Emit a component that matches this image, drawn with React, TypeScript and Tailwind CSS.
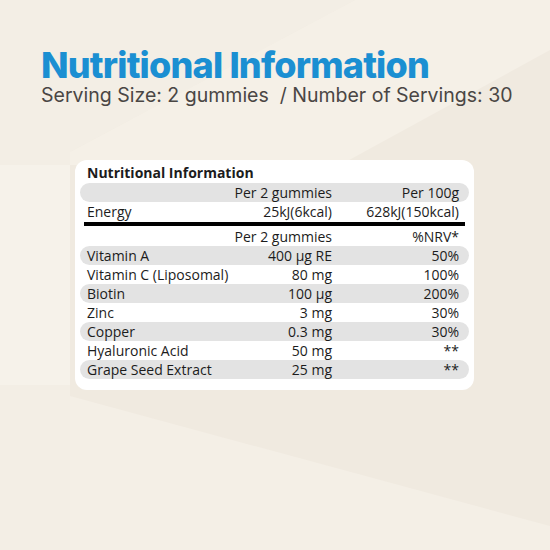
const rows = [
  { name: "Vitamin A", amount: "400 µg RE", nrv: "50%", shade: true },
  { name: "Vitamin C (Liposomal)", amount: "80 mg", nrv: "100%", shade: false },
  { name: "Biotin", amount: "100 µg", nrv: "200%", shade: true },
  { name: "Zinc", amount: "3 mg", nrv: "30%", shade: false },
  { name: "Copper", amount: "0.3 mg", nrv: "30%", shade: true },
  { name: "Hyaluronic Acid", amount: "50 mg", nrv: "**", shade: false },
  { name: "Grape Seed Extract", amount: "25 mg", nrv: "**", shade: true },
];

function Row({
  a,
  b,
  c,
  shade,
}: {
  a: string;
  b: string;
  c: string;
  shade?: boolean;
}) {
  return (
    <div
      className={
        "grid h-[19px] grid-cols-[140px_105px_127px] items-center rounded-full pl-[7px] pr-[11px] text-[14px] leading-[19px] " +
        (shade ? "bg-[#e3e3e3]" : "")
      }
    >
      <span className="whitespace-nowrap">{a}</span>
      <span className="whitespace-nowrap text-right">{b}</span>
      <span className="whitespace-nowrap text-right">{c}</span>
    </div>
  );
}

function Backdrop() {
  return (
    <svg
      className="absolute inset-0 h-full w-full"
      viewBox="0 0 550 550"
      preserveAspectRatio="none"
    >
      <rect width="550" height="550" fill="#f0eae0" />
      <polygon points="0,0 355,0 70,152 70,550 0,550" fill="#f3eee5" />
      <polygon points="355,0 550,0 550,50 340,165 70,165 70,152" fill="#f5f0e7" />
      <polygon points="0,165 70,165 70,385 0,385" fill="#f6f2ea" />
      <polygon points="70,396 550,526 550,550 70,550" fill="#f4efe6" />
    </svg>
  );
}

export default function App() {
  return (
    <main className="relative h-[550px] w-[550px] overflow-hidden">
      <Backdrop />

      <div className="relative pl-[41px] pt-[46px]">
        <h1 className="font-['Inter',sans-serif] text-[36px] font-extrabold leading-[39px] tracking-[-0.8px] text-[#1b8fd2]">
          Nutritional Information
        </h1>
        <p className="whitespace-pre font-['Inter',sans-serif] text-[19.5px] leading-[20px] text-[#4a4644]">
          Serving Size: 2 gummies  / Number of Servings: 30
        </p>
      </div>

      <div className="relative ml-[75px] mt-[55px] w-[399px] rounded-xl bg-white px-[5px] pb-[11px] pt-[3px] font-['Open_Sans',sans-serif] text-[#1c1c1c]">
        <div className="pl-[7px] text-[14px] font-bold leading-[20px]">
          Nutritional Information
        </div>

        <Row a="" b="Per 2 gummies" c="Per 100g" shade />
        <Row a="Energy" b="25kJ(6kcal)" c="628kJ(150kcal)" />

        <div className="mx-[4px] my-[1px] h-[4px] bg-black" />

        <Row a="" b="Per 2 gummies" c="%NRV*" />
        {rows.map((r) => (
          <Row key={r.name} a={r.name} b={r.amount} c={r.nrv} shade={r.shade} />
        ))}
      </div>
    </main>
  );
}
